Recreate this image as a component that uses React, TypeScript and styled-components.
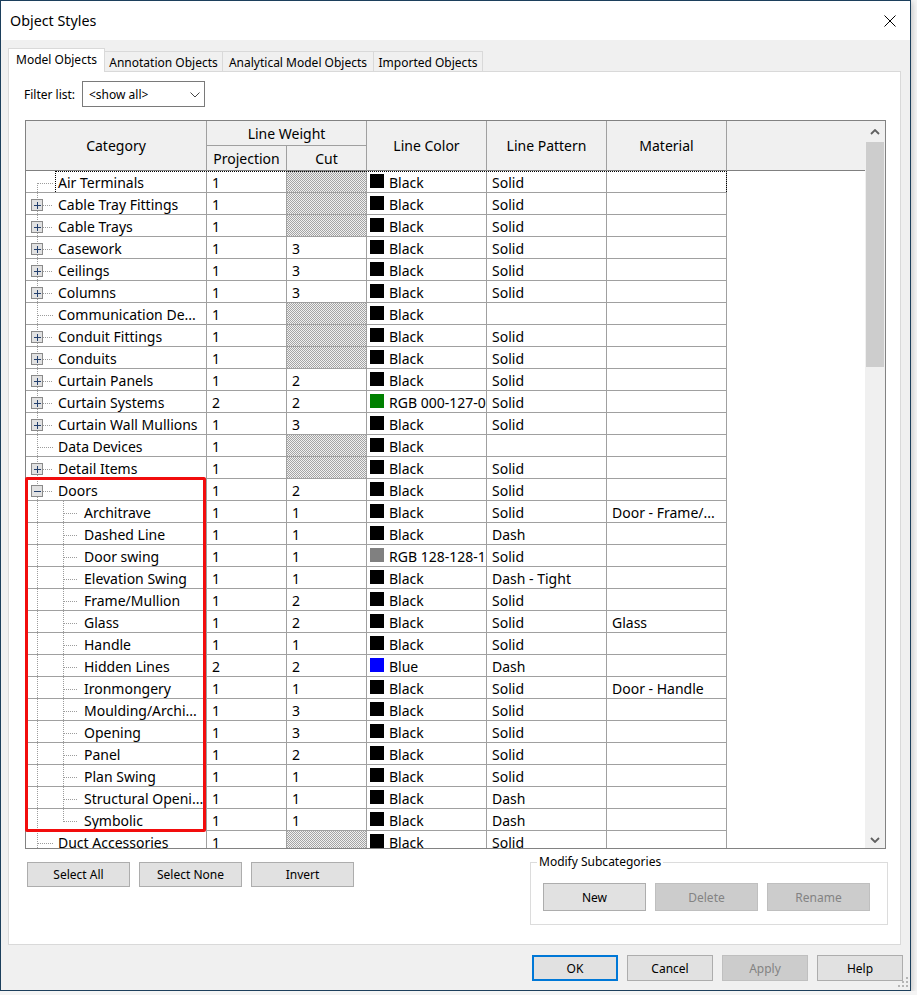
import styled, { createGlobalStyle } from "styled-components";

const GlobalStyle = createGlobalStyle`
  * { box-sizing: border-box; }
  html, body { margin: 0; padding: 0; }
  body {
    background: #f4f4f4;
    font-family: "Noto Sans", "Segoe UI", Arial, sans-serif;
    font-size: 12px;
    color: #000;
  }
`;

const COLS = "181px 80px 80px 120px 120px 120px 1fr";

// 1px checkerboard used by the "not applicable" cut cells
const HATCH =
  "url(\"data:image/svg+xml,%3Csvg xmlns='http://www.w3.org/2000/svg' width='2' height='2'%3E%3Crect width='1' height='1' fill='%23a4a4a4'/%3E%3Crect x='1' y='1' width='1' height='1' fill='%23a4a4a4'/%3E%3C/svg%3E\")";

type Swatch = "black" | "green" | "grey" | "blue";

const swatches: Record<Swatch, { fill: string; label: string }> = {
  black: { fill: "#000000", label: "Black" },
  green: { fill: "#008000", label: "RGB 000-127-000" },
  grey: { fill: "#808080", label: "RGB 128-128-128" },
  blue: { fill: "#0000ff", label: "Blue" },
};

interface Row {
  name: string;
  level: 0 | 1;
  toggle?: "+" | "-";
  projection: string;
  cut: string | null; // null = cut not applicable (hatched)
  color: Swatch;
  pattern: string;
  material?: string;
}

const top = (name: string, toggle: "+" | "-" | undefined, projection: string, cut: string | null, color: Swatch, pattern: string): Row => ({
  name, level: 0, toggle, projection, cut, color, pattern,
});

const sub = (name: string, projection: string, cut: string, color: Swatch, pattern: string, material?: string): Row => ({
  name, level: 1, projection, cut, color, pattern, material,
});

const rows: Row[] = [
  top("Air Terminals", undefined, "1", null, "black", "Solid"),
  top("Cable Tray Fittings", "+", "1", null, "black", "Solid"),
  top("Cable Trays", "+", "1", null, "black", "Solid"),
  top("Casework", "+", "1", "3", "black", "Solid"),
  top("Ceilings", "+", "1", "3", "black", "Solid"),
  top("Columns", "+", "1", "3", "black", "Solid"),
  top("Communication De...", undefined, "1", null, "black", ""),
  top("Conduit Fittings", "+", "1", null, "black", "Solid"),
  top("Conduits", "+", "1", null, "black", "Solid"),
  top("Curtain Panels", "+", "1", "2", "black", "Solid"),
  top("Curtain Systems", "+", "2", "2", "green", "Solid"),
  top("Curtain Wall Mullions", "+", "1", "3", "black", "Solid"),
  top("Data Devices", undefined, "1", null, "black", ""),
  top("Detail Items", "+", "1", null, "black", "Solid"),
  top("Doors", "-", "1", "2", "black", "Solid"),
  sub("Architrave", "1", "1", "black", "Solid", "Door - Frame/..."),
  sub("Dashed Line", "1", "1", "black", "Dash"),
  sub("Door swing", "1", "1", "grey", "Solid"),
  sub("Elevation Swing", "1", "1", "black", "Dash - Tight"),
  sub("Frame/Mullion", "1", "2", "black", "Solid"),
  sub("Glass", "1", "2", "black", "Solid", "Glass"),
  sub("Handle", "1", "1", "black", "Solid"),
  sub("Hidden Lines", "2", "2", "blue", "Dash"),
  sub("Ironmongery", "1", "1", "black", "Solid", "Door - Handle"),
  sub("Moulding/Archi...", "1", "3", "black", "Solid"),
  sub("Opening", "1", "3", "black", "Solid"),
  sub("Panel", "1", "2", "black", "Solid"),
  sub("Plan Swing", "1", "1", "black", "Solid"),
  sub("Structural Openi...", "1", "1", "black", "Dash"),
  sub("Symbolic", "1", "1", "black", "Dash"),
  top("Duct Accessories", undefined, "1", null, "black", "Solid"),
];

const tabs = [
  { label: "Model Objects", width: 97, active: true },
  { label: "Annotation Objects", width: 118 },
  { label: "Analytical Model Objects", width: 151 },
  { label: "Imported Objects", width: 109 },
];

/* ---------- window chrome ---------- */

const Window = styled.div`
  position: relative;
  width: 911px;
  height: 991px;
  border: 1px solid #1c3f5c;
  background: #f0f0f0;
  display: flex;
  flex-direction: column;
  box-shadow: 1px 2px 6px rgba(0, 0, 0, 0.22);
`;

const TitleBar = styled.div`
  flex: none;
  height: 39px;
  background: #fff;
  display: flex;
  align-items: center;
  padding: 0 14px 0 9px;
`;

const Title = styled.span`
  font-size: 14.3px;
`;

const CloseSvg = styled.svg`
  margin-left: auto;
  margin-top: 1px;
`;

const TabStrip = styled.div`
  position: relative;
  z-index: 1;
  flex: none;
  display: flex;
  align-items: flex-end;
  height: 23px;
  margin-top: 8px;
  padding-left: 7px;
`;

const Tab = styled.div<{ $active?: boolean; $w: number }>`
  width: ${(p) => p.$w}px;
  height: ${(p) => (p.$active ? 24 : 20)}px;
  margin-bottom: ${(p) => (p.$active ? -1 : 0)}px;
  padding: ${(p) => (p.$active ? "0 0 2px" : "1px 0 0")};
  background: ${(p) => (p.$active ? "#fff" : "#f0f0f0")};
  border-top: 1px solid #d9d9d9;
  border-right: 1px solid #d9d9d9;
  border-left: ${(p) => (p.$active ? "1px solid #d9d9d9" : "none")};
  display: flex;
  align-items: center;
  justify-content: center;
  white-space: nowrap;
`;

const TabPanel = styled.div`
  flex: none;
  height: 874px;
  margin: 0 9px 0 7px;
  background: #fff;
  border: 1px solid #d9d9d9;
  display: flex;
  flex-direction: column;
`;

/* ---------- filter ---------- */

const FilterRow = styled.div`
  display: flex;
  align-items: center;
  height: 26px;
  margin: 9px 0 0 15px;
`;

const FilterLabel = styled.span`
  width: 58px;
`;

const SelectBox = styled.div`
  width: 123px;
  height: 26px;
  border: 1px solid #7a7a7a;
  display: flex;
  align-items: center;
  padding: 1px 4px 0 6px;
  & > svg {
    margin-left: auto;
  }
`;

/* ---------- grid ---------- */

const GridFrame = styled.div`
  position: relative;
  flex: none;
  width: 861px;
  height: 729px;
  margin: 13px 0 0 16px;
  border: 1px solid #828282;
  display: flex;
`;

const GridBody = styled.div`
  flex: 1;
  overflow: hidden;
`;

const Header = styled.div`
  display: grid;
  grid-template-columns: ${COLS};
  grid-template-rows: 25px 25px;
  background: #f0f0f0;
`;

const HeadCell = styled.div<{ $row: string; $col: string; $filler?: boolean; $upper?: boolean }>`
  grid-row: ${(p) => p.$row};
  grid-column: ${(p) => p.$col};
  display: flex;
  align-items: center;
  justify-content: center;
  font-size: 14px;
  white-space: nowrap;
  border-right: ${(p) => (p.$filler ? "none" : "1px solid #a0a0a0")};
  border-bottom: 1px solid ${(p) => (p.$upper ? "#a0a0a0" : "#808080")};
`;

const TableRow = styled.div`
  position: relative;
  display: grid;
  grid-template-columns: ${COLS};
  height: 22px;
`;

const Cell = styled.div<{ $na?: boolean }>`
  display: flex;
  align-items: center;
  height: 22px;
  padding: 2px 4px 0 5px;
  border-right: 1px solid #a0a0a0;
  border-bottom: 1px solid #a0a0a0;
  font-size: 14px;
  white-space: nowrap;
  overflow: hidden;
  background-color: ${(p) => (p.$na ? "#f0f0f0" : "#fff")};
  background-image: ${(p) => (p.$na ? HATCH : "none")};
  background-clip: padding-box;
`;

const CategoryCell = styled(Cell)`
  padding: 0;
`;

const ColorCell = styled(Cell)`
  padding: 2px 0 0 3px;
`;

const FillerCell = styled.div`
  background: #fff;
`;

const TreeSvg = styled.svg`
  flex: none;
`;

const Name = styled.span`
  padding-top: 2px;
`;

const ColorChip = styled.span<{ $fill: string }>`
  flex: none;
  width: 14px;
  height: 14px;
  margin: -3px 5px 0 0;
  background: ${(p) => p.$fill};
`;

const ColorName = styled.span`
  min-width: 0;
  overflow: hidden;
`;

const FocusRing = styled.div`
  position: absolute;
  left: 29px;
  top: 0;
  width: 672px;
  height: 21px;
  border: 1px dotted #000;
  border-bottom: none;
  pointer-events: none;
`;

const Highlight = styled.div`
  position: absolute;
  left: -1px;
  top: 356px;
  width: 181px;
  height: 355px;
  border: 3.5px solid #f20d0d;
  border-radius: 2px;
  pointer-events: none;
`;

const ScrollBar = styled.div`
  flex: none;
  width: 20px;
  background: #f0f0f0;
  display: flex;
  flex-direction: column;
`;

const ScrollArrow = styled.div<{ $down?: boolean }>`
  flex: none;
  height: 21px;
  display: flex;
  align-items: center;
  justify-content: center;
  padding-top: ${(p) => (p.$down ? 4 : 0)}px;
  margin-top: ${(p) => (p.$down ? "auto" : "0")};
`;

const ScrollThumb = styled.div`
  flex: none;
  height: 225px;
  margin: 0 1px;
  background: #cdcdcd;
`;

/* ---------- buttons ---------- */

const Button = styled.button<{ $w: number; $h: number; $default?: boolean }>`
  flex: none;
  width: ${(p) => p.$w}px;
  height: ${(p) => p.$h}px;
  padding: 0;
  font-family: inherit;
  font-size: 12px;
  color: #000;
  background: #e1e1e1;
  border: ${(p) => (p.$default ? "2px solid #0078d7" : "1px solid #adadad")};
  &:disabled {
    background: #cccccc;
    border-color: #bfbfbf;
    color: #838383;
  }
`;

const BottomArea = styled.div`
  display: flex;
  align-items: flex-start;
  margin: 0 12px 0 18px;
`;

const SelectionButtons = styled.div`
  display: flex;
  gap: 9px;
  margin-top: 13px;
`;

const GroupBox = styled.div`
  position: relative;
  width: 358px;
  height: 63px;
  margin: 13px 0 0 auto;
  border: 1px solid #dcdcdc;
  padding: 20px 0 0 12px;
  display: flex;
  align-items: flex-start;
  gap: 9px;
`;

const GroupLabel = styled.span`
  position: absolute;
  top: -9px;
  left: 6px;
  padding: 0 2px;
  line-height: 16px;
  background: #fff;
`;

const Footer = styled.div`
  flex: none;
  display: flex;
  justify-content: flex-end;
  gap: 9px;
  margin: 10px 7px 0 0;
`;

const Grip = styled.svg`
  position: absolute;
  right: 1px;
  bottom: 2px;
`;

/* ---------- pieces ---------- */

const dotted = { stroke: "#9c9c9c", strokeWidth: 1, strokeDasharray: "1 1" };

function TreeGlyph({ row, first, lastChild }: { row: Row; first: boolean; lastChild: boolean }) {
  const w = row.level === 0 ? 32 : 58;
  return (
    <TreeSvg width={w} height={21} viewBox={`0 0 ${w} 21`}>
      <line x1="11.5" y1={first ? 12 : 0} x2="11.5" y2="21" {...dotted} />
      {row.level === 0 ? (
        <line x1={row.toggle ? 17 : 12} y1="12.5" x2="27" y2="12.5" {...dotted} />
      ) : (
        <>
          <line x1="37.5" y1="0" x2="37.5" y2={lastChild ? 13 : 21} {...dotted} />
          <line x1="38" y1="12.5" x2="52" y2="12.5" {...dotted} />
        </>
      )}
      {row.toggle && (
        <g>
          <rect x="5.5" y="6.5" width="11" height="11" fill="#e2e2e2" stroke="#8a8a8a" />
          <line x1="8" y1="12.5" x2="15" y2="12.5" stroke="#24406e" />
          {row.toggle === "+" && <line x1="11.5" y1="9" x2="11.5" y2="16" stroke="#24406e" />}
        </g>
      )}
    </TreeSvg>
  );
}

const Chevron = ({ down }: { down?: boolean }) => (
  <svg width="10" height="6" viewBox="0 0 10 6">
    <polyline
      points={down ? "1,1 5,5 9,1" : "1,5 5,1 9,5"}
      fill="none"
      stroke="#606060"
      strokeWidth="1.8"
    />
  </svg>
);

export default function App() {
  return (
    <>
      <GlobalStyle />
      <Window>
        <TitleBar>
          <Title>Object Styles</Title>
          <CloseSvg width="12" height="12" viewBox="0 0 12 12">
            <path d="M0.5 0.5 L11.5 11.5 M11.5 0.5 L0.5 11.5" stroke="#000" strokeWidth="1" />
          </CloseSvg>
        </TitleBar>

        <TabStrip>
          {tabs.map((t) => (
            <Tab key={t.label} $active={t.active} $w={t.width}>
              {t.label}
            </Tab>
          ))}
        </TabStrip>

        <TabPanel>
          <FilterRow>
            <FilterLabel>Filter list:</FilterLabel>
            <SelectBox>
              <span>&lt;show all&gt;</span>
              <svg width="10" height="6" viewBox="0 0 10 6">
                <polyline points="0.5,0.5 5,5 9.5,0.5" fill="none" stroke="#444" strokeWidth="1" />
              </svg>
            </SelectBox>
          </FilterRow>

          <GridFrame>
            <GridBody>
              <Header>
                <HeadCell $row="1 / 3" $col="1">Category</HeadCell>
                <HeadCell $row="1" $col="2 / 4" $upper>Line Weight</HeadCell>
                <HeadCell $row="2" $col="2">Projection</HeadCell>
                <HeadCell $row="2" $col="3">Cut</HeadCell>
                <HeadCell $row="1 / 3" $col="4">Line Color</HeadCell>
                <HeadCell $row="1 / 3" $col="5">Line Pattern</HeadCell>
                <HeadCell $row="1 / 3" $col="6">Material</HeadCell>
                <HeadCell $row="1 / 3" $col="7" $filler />
              </Header>

              {rows.map((row, i) => {
                const next = rows[i + 1];
                const lastChild = row.level === 1 && (!next || next.level === 0);
                const chip = swatches[row.color];
                return (
                  <TableRow key={row.name}>
                    <CategoryCell>
                      <TreeGlyph row={row} first={i === 0} lastChild={lastChild} />
                      <Name>{row.name}</Name>
                    </CategoryCell>
                    <Cell>{row.projection}</Cell>
                    <Cell $na={row.cut === null}>{row.cut}</Cell>
                    <ColorCell>
                      <ColorChip $fill={chip.fill} />
                      <ColorName>{chip.label}</ColorName>
                    </ColorCell>
                    <Cell>{row.pattern}</Cell>
                    <Cell>{row.material}</Cell>
                    <FillerCell />
                    {i === 0 && <FocusRing />}
                  </TableRow>
                );
              })}
            </GridBody>

            <ScrollBar>
              <ScrollArrow>
                <Chevron />
              </ScrollArrow>
              <ScrollThumb />
              <ScrollArrow $down>
                <Chevron down />
              </ScrollArrow>
            </ScrollBar>

            <Highlight />
          </GridFrame>

          <BottomArea>
            <SelectionButtons>
              <Button $w={103} $h={25}>Select All</Button>
              <Button $w={103} $h={25}>Select None</Button>
              <Button $w={103} $h={25}>Invert</Button>
            </SelectionButtons>
            <GroupBox>
              <GroupLabel>Modify Subcategories</GroupLabel>
              <Button $w={103} $h={28}>New</Button>
              <Button $w={103} $h={28} disabled>Delete</Button>
              <Button $w={103} $h={28} disabled>Rename</Button>
            </GroupBox>
          </BottomArea>
        </TabPanel>

        <Footer>
          <Button $w={86} $h={26} $default>OK</Button>
          <Button $w={86} $h={26}>Cancel</Button>
          <Button $w={86} $h={26} disabled>Apply</Button>
          <Button $w={86} $h={26}>Help</Button>
        </Footer>

        <Grip width="11" height="11" viewBox="0 0 11 11">
          <g fill="#b5b5b5">
            <rect x="8" y="0" width="2" height="2" />
            <rect x="4" y="4" width="2" height="2" />
            <rect x="8" y="4" width="2" height="2" />
            <rect x="0" y="8" width="2" height="2" />
            <rect x="4" y="8" width="2" height="2" />
            <rect x="8" y="8" width="2" height="2" />
          </g>
        </Grip>
      </Window>
    </>
  );
}
